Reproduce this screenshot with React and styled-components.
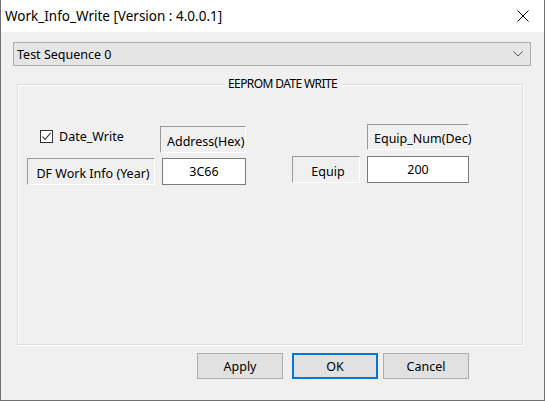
import styled, { createGlobalStyle } from "styled-components";

const Global = createGlobalStyle`
  body {
    margin: 0;
    background: #f0f0f0;
    font-family: "Noto Sans", "Liberation Sans", sans-serif;
    color: #000;
  }
`;

const Window = styled.div`
  width: 545px;
  height: 401px;
  box-sizing: border-box;
  background: #f0f0f0;
  border-left: 1px solid #707070;
  border-right: 1px solid #707070;
  border-bottom: 1px solid #707070;
  display: flex;
  flex-direction: column;
`;

const TitleBar = styled.div`
  height: 32px;
  background: #fff;
  display: flex;
  align-items: center;
  justify-content: space-between;
  padding: 0 15px 0 4px;
  font-size: 13.5px;
`;

const Body = styled.div`
  padding: 10px 13px 0 12px;
  display: flex;
  flex-direction: column;
  font-size: 12.5px;
`;

const Combo = styled.div`
  width: 518px;
  height: 24px;
  box-sizing: border-box;
  background: #e5e5e5;
  border: 1px solid #adadad;
  display: flex;
  align-items: center;
  justify-content: space-between;
  padding: 0 7px 0 3px;
`;

const GroupBox = styled.div`
  position: relative;
  margin: 18px 0 0 4px;
  width: 506px;
  height: 261px;
  box-sizing: border-box;
  border: 1px solid #dcdcdc;
  box-shadow: inset 1px 1px 0 #fff, 1px 1px 0 #fff;
  padding: 41px 0 0 9px;
  display: flex;
  align-items: flex-start;
`;

const Legend = styled.span`
  position: absolute;
  top: -9px;
  left: 206px;
  padding: 0 4px;
  background: #f0f0f0;
  font-size: 12px;
  letter-spacing: -0.6px;
  line-height: 16px;
`;

const FieldGrid = styled.div`
  display: grid;
  grid-template-columns: ${(p) => p.$cols};
  grid-template-rows: ${(p) => p.$rows};
  column-gap: 7px;
  row-gap: ${(p) => p.$rowGap}px;
  margin: ${(p) => p.$margin || "0"};
`;

const CheckLabel = styled.label`
  display: flex;
  align-items: center;
  gap: 6px;
  margin: 2px 0 0 13px;
  align-self: start;
`;

const CheckBox = styled.span`
  width: 13px;
  height: 13px;
  box-sizing: border-box;
  border: 1px solid #333;
  background: #fff;
  display: flex;
  align-items: center;
  justify-content: center;
`;

const Static = styled.div`
  box-sizing: border-box;
  border-top: 1px solid #999;
  border-left: 1px solid #999;
  border-right: 1px solid #fff;
  border-bottom: 1px solid #fff;
  background: #f0f0f0;
  display: flex;
  align-items: center;
  justify-content: ${(p) => (p.$center ? "center" : "flex-start")};
  padding: ${(p) => (p.$center ? "3px 0 0 4px" : "3px 0 0 6px")};
  white-space: nowrap;
  margin-left: ${(p) => p.$shift || 0}px;
`;

const Input = styled.div`
  box-sizing: border-box;
  background: #fff;
  border: 1px solid #7a7a7a;
  display: flex;
  justify-content: center;
  padding-top: 4px;
`;

const ButtonRow = styled.div`
  display: flex;
  justify-content: flex-end;
  margin: 8px 62px 0 0;
`;

const Button = styled.div`
  width: 86px;
  height: 26px;
  box-sizing: border-box;
  background: #e1e1e1;
  border: ${(p) => (p.$default ? "2px solid #0078d7" : "1px solid #adadad")};
  display: flex;
  align-items: center;
  justify-content: center;
  margin-left: ${(p) => p.$gap || 0}px;
`;

export default function App() {
  return (
    <>
      <Global />
      <Window>
        <TitleBar>
          <span>Work_Info_Write [Version : 4.0.0.1]</span>
          <svg width="12" height="12" viewBox="0 0 12 12">
            <path d="M0.5 0.5 L11.5 11.5 M11.5 0.5 L0.5 11.5" stroke="#000" strokeWidth="1" />
          </svg>
        </TitleBar>
        <Body>
          <Combo>
            <span>Test Sequence 0</span>
            <svg width="10" height="6" viewBox="0 0 10 6">
              <path d="M0.5 0.5 L5 5 L9.5 0.5" stroke="#555" strokeWidth="1" fill="none" />
            </svg>
          </Combo>
          <GroupBox>
            <Legend>EEPROM DATE WRITE</Legend>
            <FieldGrid $cols="128px 84px" $rows="27px 27px" $rowGap={5}>
              <CheckLabel>
                <CheckBox>
                  <svg width="11" height="11" viewBox="0 0 11 11">
                    <path d="M1.5 5.5 L4 8.5 L9.5 2" stroke="#222" strokeWidth="1.1" fill="none" />
                  </svg>
                </CheckBox>
                Date_Write
              </CheckLabel>
              <Static $shift={-2}>Address(Hex)</Static>
              <Static $center>DF Work Info (Year)</Static>
              <Input>3C66</Input>
            </FieldGrid>
            <FieldGrid $cols="68px 102px" $rows="26px 27px" $rowGap={6} $margin="-2px 0 0 46px">
              <span />
              <Static>Equip_Num(Dec)</Static>
              <Static $center>Equip</Static>
              <Input>200</Input>
            </FieldGrid>
          </GroupBox>
          <ButtonRow>
            <Button>Apply</Button>
            <Button $default $gap={9}>OK</Button>
            <Button $gap={5}>Cancel</Button>
          </ButtonRow>
        </Body>
      </Window>
    </>
  );
}
